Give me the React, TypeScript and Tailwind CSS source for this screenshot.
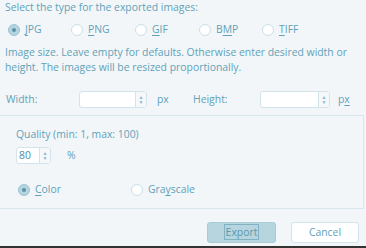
import React from "react";

const text = "text-[#5fa2b9]";

const Radio = ({ checked, label, u, x }: { checked?: boolean; label: string; u: number; x?: string }) => (
  <label className={`flex items-center gap-[5px] ${x ?? ""}`}>
    <span
      className={`w-[12px] h-[12px] rounded-full border flex items-center justify-center ${
        checked ? "bg-[#b4d4df] border-[#9cc5d3]" : "bg-white border-[#c9dfe7]"
      }`}
    >
      {checked && <span className="w-[4px] h-[4px] rounded-full bg-[#5b93a6]" />}
    </span>
    <span>
      {label.slice(0, u)}
      <span className="underline underline-offset-2">{label[u]}</span>
      {label.slice(u + 1)}
    </span>
  </label>
);

const Spin = ({ w, value }: { w: string; value?: string }) => (
  <div className={`flex h-[17px] ${w} bg-white border border-[#d3e4ea] rounded-[3px]`}>
    <div className="flex-1 pl-[2px] leading-[15px] text-[#4f8ea3]">{value}</div>
    <div className="w-[11px] border-l border-[#d3e4ea] bg-[#f4f8fa] flex flex-col items-center justify-center text-[#8bb7c6] text-[5px] leading-[5px]">
      <span>▲</span>
      <span>▼</span>
    </div>
  </div>
);

export default function App() {
  return (
    <div
      className={`w-[366px] h-[248px] bg-[#f2f6f8] ${text} text-[10.4px] flex flex-col overflow-hidden`}
      style={{ fontFamily: "'Open Sans', 'Noto Sans', sans-serif" }}
    >
      <p className="pl-[5px] leading-[14px]">Select the type for the exported images:</p>
      <div className="flex items-center mt-[9px] h-[14px] pl-[8px]">
        <Radio checked label="JPG" u={0} x="w-[63px]" />
        <Radio label="PNG" u={0} x="w-[64px]" />
        <Radio label="GIF" u={0} x="w-[64px]" />
        <Radio label="BMP" u={1} x="w-[63px]" />
        <Radio label="TIFF" u={0} />
      </div>
      <p className="pl-[5px] pr-[10px] mt-[8px] leading-[15px]">
        Image size. Leave empty for defaults. Otherwise enter desired width or height. The images will be resized
        proportionally.
      </p>
      <div className="flex items-center mt-[16px] h-[17px]">
        <span className="pl-[6px] w-[79px]">Width:</span>
        <Spin w="w-[68px]" />
        <span className="ml-[10px] w-[36px]">px</span>
        <span className="w-[67px]">Height:</span>
        <Spin w="w-[70px]" />
        <span className="ml-[8px]">
          p<span className="underline underline-offset-2">x</span>
        </span>
      </div>
      <div className="mt-[7px] w-[364px] h-[94px] border-t border-r border-b border-[#d6e6ec] flex flex-col">
        <p className="pl-[16px] mt-[11px] leading-[14px]">Quality (min: 1, max: 100)</p>
        <div className="flex items-center pl-[16px] mt-[6px]">
          <Spin w="w-[35px]" value="80" />
          <span className="ml-[16px]">%</span>
        </div>
        <div className="flex items-center h-[14px] mt-[19px] pl-[18px]">
          <Radio checked label="Color" u={0} x="w-[113px]" />
          <Radio label="Grayscale" u={3} />
        </div>
      </div>
      <div className="flex justify-end gap-[15px] pr-[7px] mt-[13px]">
        <button className="w-[69px] h-[21px] rounded-[3px] bg-[#b6d5df] border border-[#a9cbd7] text-[#5b98ad]">
          <span className="border border-[#7fb2c3] px-[1px]">Export</span>
        </button>
        <button className="w-[68px] h-[21px] rounded-[3px] bg-white border border-[#d3e4ea] text-[#5fa2b9]">
          Cancel
        </button>
      </div>
      <div className="mt-auto h-[2px] bg-[#333]" />
    </div>
  );
}
